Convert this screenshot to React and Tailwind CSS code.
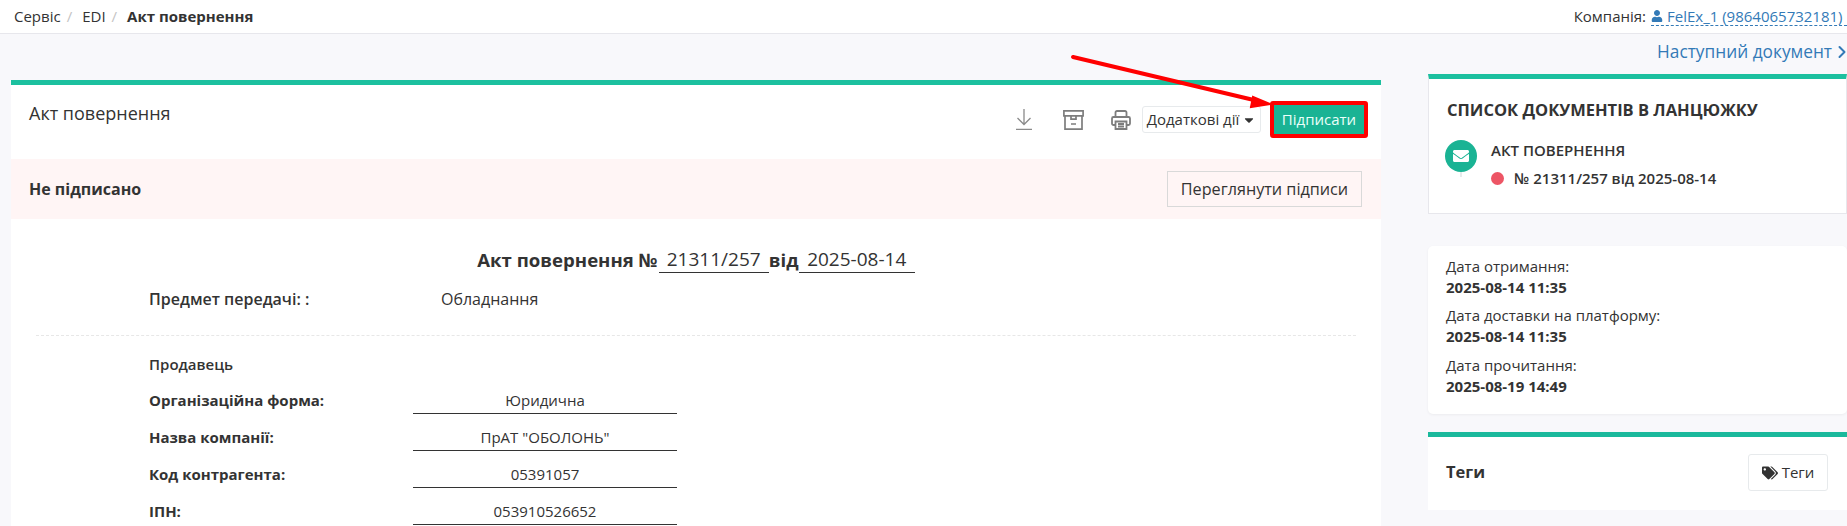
import { ChevronRight } from "lucide-react";
import { FaUser, FaEnvelope, FaTags, FaCaretDown } from "react-icons/fa";

const sellerRows = [
  { label: "Організаційна форма:", value: "Юридична" },
  { label: "Назва компанії:", value: 'ПрАТ "ОБОЛОНЬ"' },
  { label: "Код контрагента:", value: "05391057" },
  { label: "ІПН:", value: "053910526652" },
];

const dates = [
  { label: "Дата отримання:", value: "2025-08-14 11:35", cls: "" },
  { label: "Дата доставки на платформу:", value: "2025-08-14 11:35", cls: "mt-[7px]" },
  { label: "Дата прочитання:", value: "2025-08-19 14:49", cls: "mt-[8px]" },
];

const DownloadIcon = () => (
  <svg width="16" height="21" viewBox="0 0 16 21" fill="none" stroke="#8a8a8a" strokeWidth="1.3">
    <path d="M8 0v15.500M1.500 9 8 15.500 14.500 9M0 20.500h16" />
  </svg>
);

const ArchiveIcon = () => (
  <svg width="21" height="20" viewBox="0 0 21 20" fill="none" stroke="#7d7d7d" strokeWidth="1.700">
    <path d="M.9.900h19.200v5H.9zM2 5.900v13.200h17V5.900" />
    <path d="M8 6v3.200h5V6M8 14h5" />
  </svg>
);

const PrintIcon = () => (
  <svg width="20" height="20" viewBox="0 0 20 20" fill="none" stroke="#7d7d7d" strokeWidth="1.800">
    <path d="M4.500 7V2.500a1.500 1.500 0 0 1 1.500-1.500h8a1.500 1.500 0 0 1 1.500 1.500V7" />
    <path d="M4.500 15H2.500A1.500 1.500 0 0 1 1 13.500V8.500A1.500 1.500 0 0 1 2.500 7h15A1.500 1.500 0 0 1 19 8.500v5a1.500 1.500 0 0 1-1.500 1.500h-2" />
    <path d="M4.500 11.500h11V19h-11zM7 14h6M7 16.500h6" />
  </svg>
);

const App = () => {
  return (
    <div className="relative h-[526px] w-[1847px] overflow-hidden bg-[#f8f8fb] font-['Open_Sans',sans-serif] text-[#333]">
      <header className="flex h-[34px] items-center justify-between border-b border-[#e7e7ec] bg-white pb-[1px] pl-[14px] text-[15px]">
        <nav className="flex items-center">
          <span>Сервіс</span>
          <span className="ml-[6px] mr-[10px] text-[#c4c4c4]">/</span>
          <span>EDI</span>
          <span className="ml-[6px] mr-[10px] text-[#c4c4c4]">/</span>
          <b className="font-bold">Акт повернення</b>
        </nav>
        <div className="flex items-center whitespace-nowrap">
          <span>Компанія:</span>
          <span className="ml-[5px] flex w-[196px] items-center overflow-hidden border-b border-dashed border-[#337ab7] leading-[18px] text-[#337ab7]">
            <FaUser className="mr-[4px] shrink-0 text-[12px]" />
            FelEx_1 (9864065732181)
            <FaCaretDown className="ml-[3px] shrink-0 text-[12px] text-[#333]" />
          </span>
        </div>
      </header>

      <main className="flex">
        <section className="ml-[11px] mt-[46px] w-[1370px] shrink-0">
          <div className="border-t-[5px] border-[#1cc09f] bg-white">
            <div className="flex h-[74px] items-start justify-between pl-[18px] pr-[13px]">
              <h2 className="mt-[14px] text-[18px] leading-[28px]">Акт повернення</h2>
              <div className="mt-[16px] flex items-center">
                <DownloadIcon />
                <span className="ml-[31px]"><ArchiveIcon /></span>
                <span className="ml-[27px]"><PrintIcon /></span>
                <button className="ml-[11px] flex h-[27px] w-[119px] items-center justify-center rounded-[3px] border border-[#e7eaec] bg-white text-[15px] text-[#333]">
                  Додаткові дії
                  <FaCaretDown className="ml-[3px] text-[14px]" />
                </button>
                <button className="ml-[9px] flex h-[37px] w-[98px] items-center justify-center rounded-[3px] border-[4px] border-[#f00] bg-[#1ab394] text-[15px] text-[#eafff9]">
                  Підписати
                </button>
              </div>
            </div>
            <div className="flex h-[60px] items-center justify-between bg-[#fff5f5] pl-[18px] pr-[19px]">
              <b className="text-[16px] font-bold">Не підписано</b>
              <button className="h-[36px] w-[195px] border border-[#d9d9d9] text-[16.200px]">
                Переглянути підписи
              </button>
            </div>
            <div className="h-[400px] px-[25px]">
              <div className="flex h-[54px] items-end justify-center">
                <b className="text-[18.600px] font-bold leading-[26px]">Акт повернення №</b>
                <span className="ml-[1px] w-[110px] border-b border-[#333] text-center text-[19px] leading-[26px]">21311/257</span>
                <b className="w-[30px] text-center text-[18.600px] font-bold leading-[26px]">від</b>
                <span className="w-[116px] border-b border-[#333] text-center text-[19px] leading-[26px]">2025-08-14</span>
              </div>
              <div className="ml-[113px] mt-[16px] flex text-[16px] leading-[20px]">
                <b className="w-[292px] font-semibold">Предмет передачі: :</b>
                <span>Обладнання</span>
              </div>
              <div className="mt-[26px] border-t border-dashed border-[#e7e7e7]" />
              <div className="ml-[113px] mt-[18px] text-[15px] font-semibold leading-[20px]">Продавець</div>
              <div className="mt-[3px]">
                {sellerRows.map((row) => (
                  <div key={row.label} className="ml-[113px] flex h-[37px] items-end">
                    <b className="mb-[4px] w-[264px] text-[15px] font-bold leading-[20px]">{row.label}</b>
                    <span className="w-[264px] border-b border-[#333] pb-[3px] text-center text-[15px] leading-[20px]">
                      {row.value}
                    </span>
                  </div>
                ))}
              </div>
            </div>
          </div>
        </section>

        <aside className="ml-[47px] flex-1">
          <a className="flex h-[40px] items-center justify-end pb-[4px] text-[17.300px] text-[#337ab7]">
            Наступний документ
            <ChevronRight className="-mr-[5px] h-[20px] w-[20px]" strokeWidth={2.4} />
          </a>
          <div className="h-[140px] border border-[#e7e7ec] border-t-[5px] border-t-[#1cc09f] bg-white pl-[18px]">
            <h3 className="mt-[19px] text-[16.500px] font-bold leading-[24px]">СПИСОК ДОКУМЕНТІВ В ЛАНЦЮЖКУ</h3>
            <div className="mt-[18px] flex">
              <div className="-ml-[2px] flex flex-col items-center">
                <div className="flex h-[32px] w-[32px] items-center justify-center rounded-full bg-[#1ab394] text-white">
                  <FaEnvelope className="text-[16px]" />
                </div>
                <div className="h-[5px] w-[2px] bg-[#e7eaec]" />
              </div>
              <div className="ml-[14px]">
                <div className="text-[15px] font-semibold leading-[20px]">АКТ ПОВЕРНЕННЯ</div>
                <div className="mt-[8px] flex items-center text-[15px] font-semibold leading-[20px]">
                  <span className="h-[13px] w-[13px] rounded-full bg-[#ed5565]" />
                  <span className="ml-[10px]">№ 21311/257 від 2025-08-14</span>
                </div>
              </div>
            </div>
          </div>

          <div className="mt-[32px] h-[168px] rounded-[5px] bg-white pl-[18px] pt-[10px] text-[15px] leading-[21px] shadow-[0_1px_3px_rgba(0,0,0,0.05)]">
            {dates.map((d) => (
              <div key={d.label} className={d.cls}>
                <div>{d.label}</div>
                <b className="block font-bold">{d.value}</b>
              </div>
            ))}
          </div>

          <div className="mt-[18px] flex h-[78px] items-start justify-between border-t-[5px] border-[#1ab99c] bg-white pl-[18px] pr-[19px]">
            <b className="mt-[23px] text-[16.500px] font-bold leading-[24px]">Теги</b>
            <button className="mt-[17px] flex h-[37px] w-[80px] items-center justify-center rounded-[3px] border border-[#e7eaec] text-[15px]">
              <FaTags className="mr-[4px] text-[16px]" />
              Теги
            </button>
          </div>
        </aside>
      </main>

      {/* red arrow from the annotation, lies over the page */}
      <svg className="pointer-events-none absolute left-0 top-0" width="1847" height="526">
        <path d="M1073 57 1258 101" stroke="#f00" strokeWidth="4" strokeLinecap="round" />
        <path d="M1253 97 1270 104 1251 107Z" fill="#f00" stroke="#f00" strokeWidth="2" />
      </svg>
    </div>
  );
};

export default App;
